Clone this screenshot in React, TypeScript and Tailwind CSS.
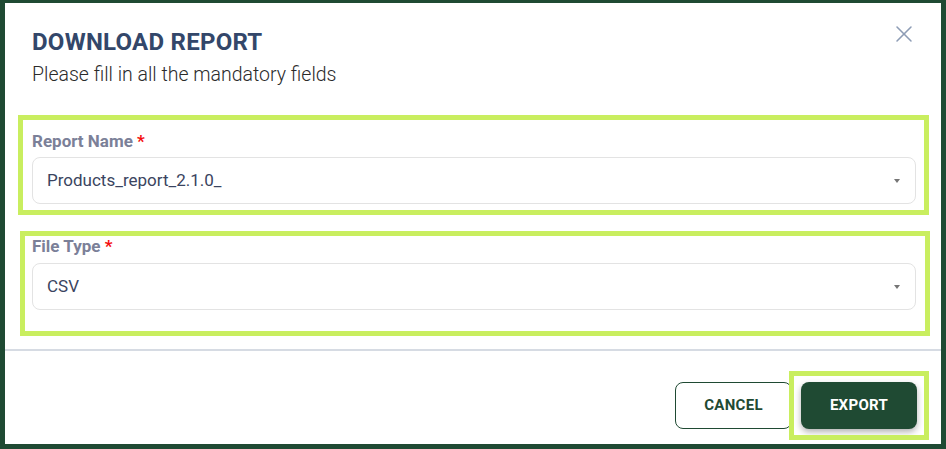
import { X } from "lucide-react";

const fields = [
  { label: "Report Name", value: "Products_report_2.1.0_", box: "mt-[26px] ml-[-14px] mr-[-15px] pl-[9px] pr-[8px] pt-[9px] pb-[6px]", gap: "mt-1", lh: "leading-6" },
  { label: "File Type", value: "CSV", box: "mt-4 ml-[-12px] mr-[-16px] pl-[7px] pr-[9px] pt-0 pb-[21px]", gap: "mt-[7px]", lh: "leading-5" },
];

const Caret = () => (
  <svg width="8" height="6" viewBox="0 0 8 6" className="text-[#757575]">
    <path d="M1 1h6L4 5z" fill="currentColor" />
  </svg>
);

export default function App() {
  return (
    <div className="min-h-[449px] w-[946px] bg-[#1f4a33] pt-[3px] px-[5px] pb-[5px] font-['Roboto',sans-serif]">
      <div className="h-[441px] bg-white flex flex-col">
        <div className="px-[27px] pt-[23px]">
          <div className="flex justify-between items-start">
            <h2 className="text-2xl leading-8 font-bold text-[#33476a] tracking-[0.25px]">DOWNLOAD REPORT</h2>
            <button className="mt-[-6px] mr-[-4px] text-[#8d9cb5]">
              <X size={28} strokeWidth={1.3} />
            </button>
          </div>
          <p className="mt-[3px] text-[19.5px] leading-7 font-light text-[#2b2b2b]">Please fill in all the mandatory fields</p>

          {fields.map((f) => (
            <div key={f.label} className={`border-[5px] border-[#c9ee5f] ${f.box}`}>
              <label className={`block text-[17px] ${f.lh} font-bold text-[#7b8098]`}>
                {f.label} <span className="text-[#f40d0d]">*</span>
              </label>
              <div className={`${f.gap} h-[47px] rounded-lg border border-[#e3e3e3] flex items-center justify-between pl-[14px] pr-[14px]`}>
                <span className="text-[17px] text-[#3a4460]">{f.value}</span>
                <Caret />
              </div>
            </div>
          ))}
        </div>

        <div className="mt-[13px] h-[3px] border-t-2 border-[#d6dbe3]" />

        <div className="mt-[30px] pr-6 flex justify-end gap-[9px]">
          <button className="w-[117px] h-[47px] rounded-lg border border-[#1f4a33] text-[#1f4a33] text-[15px] font-bold tracking-[0.3px]">
            CANCEL
          </button>
          <div className="relative">
            <button className="w-[116px] h-[47px] rounded-lg bg-[#1f4a33] text-white text-[15px] font-bold tracking-[0.3px] shadow-[0_3px_6px_rgba(0,0,0,0.3)]">
              EXPORT
            </button>
            <span className="absolute -inset-x-3 -inset-y-[11px] border-[5px] border-[#c9ee5f] pointer-events-none" />
          </div>
        </div>
      </div>
    </div>
  );
}
